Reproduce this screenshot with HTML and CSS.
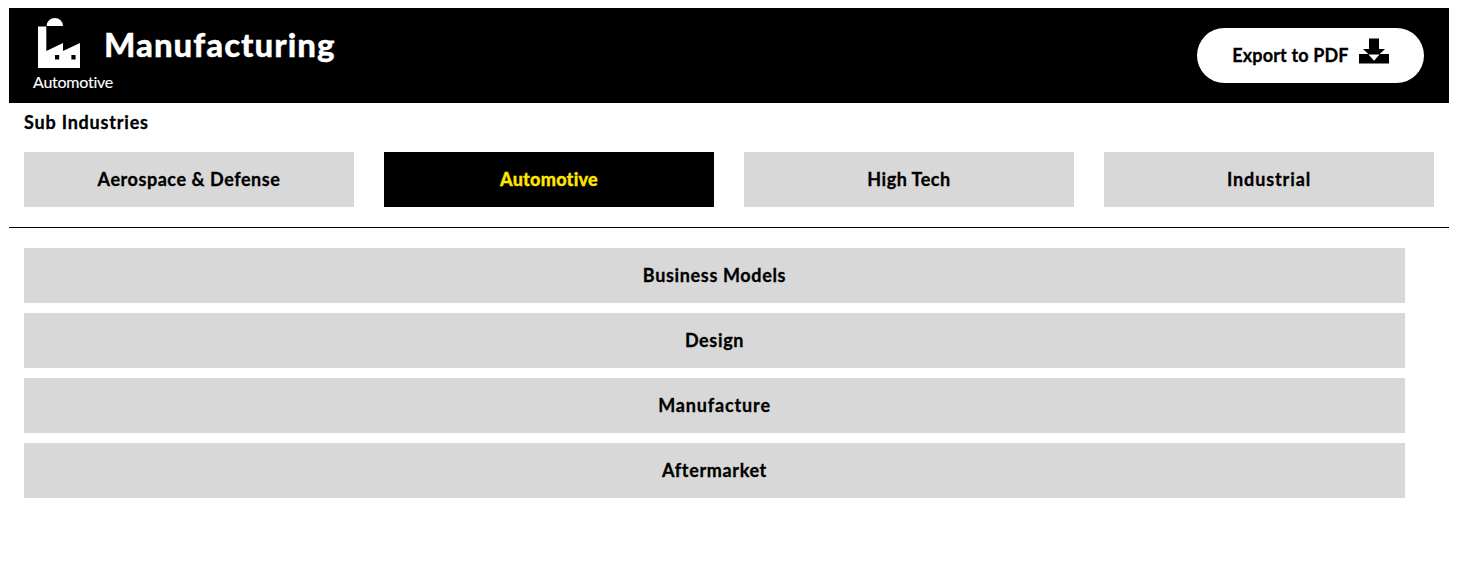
FILE: index.html
```html
<!DOCTYPE html>
<html lang="en">
<head>
<meta charset="utf-8">
<title>Manufacturing</title>
<link rel="stylesheet" href="styles.css">
</head>
<body>
<header class="banner">
  <div class="brand">
    <div class="brand-row">
      <svg class="factory" viewBox="0 0 42 50" aria-hidden="true">
        <path fill="#fff" d="M8.600 8a8.200 8 0 0 1 16.400 0z"/>
        <path fill="#fff" fill-rule="evenodd" d="M0 8.400H8.300V33L25 25V33L42 25V50H0zM17 37v4.500h4.200v-4.500zM33.400 37v4.500h4.200v-4.500z"/>
      </svg>
      <h1 class="title">Manufacturing</h1>
    </div>
    <div class="subtitle">Automotive</div>
  </div>
  <button class="export">
    <span class="export-label">Export to PDF</span>
    <svg class="download" viewBox="0 0 30 26" aria-hidden="true">
      <path d="M10 .4H20V11H26L20.700 16H30V25.400H0V16H9.300L4 11H10z"/>
      <path fill="#fff" d="M9.500 16.500H20.500L15 22.800z"/>
    </svg>
  </button>
</header>
<section class="industries">
  <h2 class="heading">Sub Industries</h2>
  <nav class="tabs">
    <a class="tile aerospace">Aerospace &amp; Defense</a>
    <a class="tile active">Automotive</a>
    <a class="tile high-tech">High Tech</a>
    <a class="tile industrial">Industrial</a>
  </nav>
</section>
<main class="stages">
  <a class="tile">Business Models</a>
  <a class="tile">Design</a>
  <a class="tile manufacture">Manufacture</a>
  <a class="tile">Aftermarket</a>
</main>
</body>
</html>
```
FILE: styles.css
```css
* { box-sizing: border-box; }
body {
  width: 1440px;
  margin: 8px 0 0 9px;
  background: #fff;
  color: #000;
  font-family: Lato, sans-serif;
  font-size: 18px;
  font-weight: 700;
  font-variant-ligatures: none;
  letter-spacing: 0.65px;
  -webkit-text-stroke: 0.3px currentColor;
}
.banner {
  display: flex;
  justify-content: space-between;
  height: 95px;
  padding: 10px 25px 0 24px;
  background: #000;
  color: #fff;
}
.brand-row { display: flex; gap: 24px; padding-left: 5px; height: 50px; }
.factory { width: 42px; height: 50px; }
.title {
  margin: 6px 0 0;
  font-size: 33px;
  font-weight: 900;
  line-height: 40px;
  letter-spacing: 1px;
}
.subtitle {
  margin-top: 4px;
  font-size: 16px;
  font-weight: 400;
  line-height: 20px;
  letter-spacing: -0.25px;
  -webkit-text-stroke-width: 0.1px;
}
.export {
  display: flex;
  gap: 10px;
  width: 227px;
  height: 55px;
  margin-top: 10px;
  padding: 10px 35px;
  border: 0;
  border-radius: 28px;
  background: #fff;
  color: #000;
  font: inherit;
  letter-spacing: 0.15px;
}
.export-label { width: 117px; line-height: 34px; white-space: nowrap; }
.download { flex: none; width: 30px; height: 26px; }
.industries {
  height: 125px;
  padding: 8px 15px 0;
  border-bottom: 1px solid #000;
}
.heading { margin: 0 0 19px; font-size: 18px; line-height: 22px; letter-spacing: 0.8px; }
.tabs { display: grid; grid-template-columns: repeat(4, 1fr); gap: 30px; }
.tile {
  height: 55px;
  background: #d8d8d8;
  line-height: 54px;
  text-align: center;
}
.aerospace { letter-spacing: 0.55px; }
.high-tech { letter-spacing: 0.5px; }
.industrial { letter-spacing: 0.9px; }
.manufacture { letter-spacing: 0.85px; }
.active { background: #000; color: #ffe600; font-weight: 900; letter-spacing: 0.25px; }
.stages {
  display: grid;
  gap: 10px;
  width: 1381px;
  margin: 20px 0 0 15px;
}
```
